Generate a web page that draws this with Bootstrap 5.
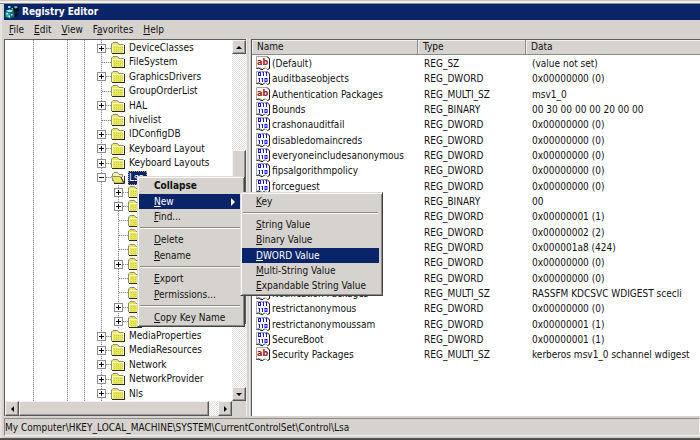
<!DOCTYPE html>
<html lang="en">
<head>
<meta charset="utf-8">
<meta name="viewport" content="width=device-width, initial-scale=1">
<title>Registry Editor</title>
<link href="https://cdn.jsdelivr.net/npm/bootstrap@5.3.0/dist/css/bootstrap.min.css" rel="stylesheet">
<style>
:root{--face:#d6d3ce;--navy:#0a246a;--shade:#848284;--edge:#5c5b59}
body{font:10px/14px "DejaVu Sans Condensed","DejaVu Sans",sans-serif;color:#111;background:var(--face);overflow:hidden}
u{text-underline-offset:1px;text-decoration-thickness:1px}
.app-window{padding:0 0 0 4px;border-bottom:2px solid #505050;box-shadow:inset 2px 0 #e4e2de}
.frame-top{height:4px;margin-left:-4px;border-top:1px solid #c9c6c1;border-bottom:1px solid #8d8c8a;background:#efeeeb}
.title-bar{height:16px;background:var(--navy);color:#fff;font-weight:bold;padding-left:1px;gap:3px}
.menu-bar{height:19px;padding-left:5px;gap:10px}
.menu-bar button,.popup-menu button{all:unset;cursor:default;color:#111}
.menu-bar button:focus-visible{outline:1px dotted #111}
.tree-pane{flex:0 0 242px;border-top:1px solid var(--edge);border-left:1px solid var(--edge)}
.splitter{flex:none;width:5px;background:linear-gradient(90deg,#edebe8 1px,var(--face) 1px,var(--face) 3px,#f3f2f0 3px,#c2bfba)}
.value-pane{border-top:1px solid var(--edge);border-left:1px solid var(--edge);background:#fff}
.tree-list{padding-top:1px;--dots:repeating-linear-gradient(#8a8a8a 0 1px,#e2e2e2 1px 2px);background:var(--dots) 28px 0/1px 100% no-repeat,var(--dots) 62px 0/1px 100% no-repeat,var(--dots) 79px 0/1px 100% no-repeat,var(--dots) 96px 0/1px 100% no-repeat #fff}
.tree-row{height:14px;padding-left:92px;white-space:nowrap}
li:nth-child(5n+3)>.tree-row,li:nth-child(5n)>.tree-row{height:15px}
.sub-list{background:var(--dots) 113px 0/1px 100% no-repeat}
.sub-list .tree-row{padding-left:109px}
.tree-row svg{width:14px;height:12px;flex:none}
.toggle{all:unset;box-sizing:border-box;width:9px;height:9px;border:1px solid #8c8c8c;background:linear-gradient(#000,#000) center/5px 1px no-repeat,linear-gradient(#000,#000) center/1px 5px no-repeat,#fff}
.toggle.opened{background:linear-gradient(#000,#000) center/5px 1px no-repeat,#fff}
.stem{width:5px;height:1px;background:repeating-linear-gradient(90deg,#8a8a8a 0 1px,#e2e2e2 1px 2px)}
.stem.leaf{width:9px;margin-left:5px}
.node-label{padding:0 1px;margin-left:3px}
.node-label.chosen{padding-right:3px;background:var(--navy);color:#fff;outline:1px dotted #b9a45c;outline-offset:-1px}
.scroll-v{width:14px;flex:none}
.scroll-h{height:15px}
.track{background:repeating-conic-gradient(#fff 0 25%,#e4e2de 0 50%) 0 0/2px 2px}
.raised{background:var(--face);border:1px solid;border-color:#f4f3f1 #555 #555 #f4f3f1;box-shadow:inset -1px -1px #9a9894}
.arrow-btn{all:unset;box-sizing:border-box;width:14px;height:14px;flex:none;display:grid;place-items:center;background:var(--face);border:1px solid;border-color:#f4f3f1 #555 #555 #f4f3f1;box-shadow:inset -1px -1px #9a9894}
.gap-above{height:96px}
.thumb-v{height:174px}
.thumb-h{flex:0 0 190px}
.values{table-layout:fixed;width:100%;border-collapse:separate;border-spacing:0}
.values th{height:15px;line-height:14px;padding:0 0 0 5px;font-weight:normal;background:var(--face);border-bottom:1px solid #8d8b87;border-right:1px solid #8d8b87;box-shadow:inset 1px 1px #f0efec}
.values th:last-child{border-right:0}
.values td{height:15px;line-height:13px;padding:2px 0 0 6px;white-space:nowrap}
.values tbody tr:nth-child(3n) td{height:16px}
.values td:first-child{padding-left:4px}
.values svg{width:15px;height:14px;flex:none;margin:-1px 1px 0 0}
.col-name{width:166px}
.col-type{width:108px}
.status-bar{margin:2px 0 2px;height:18px;border:1px solid;border-color:#8d8b87 #f4f3f1 #f4f3f1 #8d8b87;line-height:18px}
.popup-menu{position:absolute;z-index:10;display:block;margin:0;padding:1px;background:var(--face);border:1px solid;border-color:#dcdad6 #444 #444 #dcdad6;box-shadow:inset 1px 1px #fbfbfa,inset -1px -1px #8b8985;list-style:none}
.popup-menu li{height:15px;line-height:15px;padding:0 2px 0 15px;margin:0 2px 0 0;white-space:nowrap}
.popup-menu li.tall{height:16px;line-height:16px}
.popup-menu li.rule{height:8px;padding:3px 0 0}
.popup-menu li.rule hr{margin:0 1px;border:0;opacity:1;height:2px;background:linear-gradient(#8b8985 1px,#fbfbfa 1px)}
.popup-menu li.lit,.popup-menu li.lit>button{background:var(--navy);color:#fff}
.key-menu{left:137px;top:176px;width:108px}
.new-menu{left:101px;top:-2px;width:143px;color:#111}
.new-menu li{padding-left:14px}
</style>
<script src="https://cdn.jsdelivr.net/npm/bootstrap@5.3.0/dist/js/bootstrap.bundle.min.js"></script>
</head>
<body>
<svg class="d-none" aria-hidden="true">
  <symbol id="folder" viewBox="0 0 14 12"><path d="M1 11V2l1-1h5l1 1.500h4V11z" fill="#e9e75c"/><path d="M.5 11V2L2 .5h4.500L8 2.500h4.500" fill="none" stroke="#8f8e68"/><path d="M1.500 3v7.500M2 3.500h10" stroke="#fdfcc8"/><path d="M3 5.500h9M3 7.500h9M3 9.500h9" stroke="#d2cf40" stroke-dasharray="1 1"/><path d="M1 11.500h12.500M13.500 3v9" fill="none" stroke="#2b2b20"/></symbol>
  <symbol id="folder-open" viewBox="0 0 14 12"><path d="M1.500 9V2L3 .5h3.500L8 2.500h3.500V5" fill="#f6f4b4" stroke="#8f8e68"/><path d="M3.500 11 .5 4.500h9l3 6.500z" fill="#e9e75c" stroke="#8f8e68"/><path d="M3 11.500h10.500V4M10 5l3 6" fill="none" stroke="#2b2b20"/></symbol>
  <symbol id="page" viewBox="0 0 15 14"><path d="M.5 12.500V.5h11l2 2v10l-2 1-1.500-1.500H8L6.500 13.500 5 12H3z" fill="#fff" stroke="#a5a5a5"/><path d="M11 .5 13.500 3v9.500l-2 1M.5 12.500 3 12l2 1.500h2L8.500 12" fill="none" stroke="#222"/></symbol>
  <symbol id="text-value" viewBox="0 0 15 14"><use href="#page"/><text x="1" y="9" font-family="DejaVu Sans Condensed,sans-serif" font-size="9" font-weight="bold" fill="#a01414">ab</text></symbol>
  <symbol id="bits-value" viewBox="0 0 15 14"><use href="#page"/><g fill="none" stroke="#1414f0"><rect x="2.500" y="1.500" width="2" height="3"/><path d="M7.500 1v4M10.500 1v4M6.500 1.500h1M9.500 1.500h1M3.500 7v4M6.500 7v4M2.500 7.500h1M5.500 7.500h1"/><rect x="9" y="7.500" width="2" height="3"/></g></symbol>
</svg>

<div class="app-window d-flex flex-column vh-100 position-relative">
  <div class="frame-top"></div>
  <header class="title-bar d-flex align-items-center">
    <svg class="flex-shrink-0" width="14" height="14" viewBox="0 0 14 14" aria-hidden="true"><path d="M0 5.500 4 4l5 1.500V12l-4 2-5-2z" fill="#103c3c"/><path d="M.5 6.500 5 8v5.500L.5 12z" fill="#2fa3a3"/><path d="m.5 5.800 4-1.400L9 5.800 5 7.500z" fill="#8ff3f3"/><path d="M5 8l4-1.500V12l-4 1.500z" fill="#156a6a"/><path d="M1.500 8h1.500v1.500H1.500zM3.500 10.500H5V12H3.500zM6 9h1.500v1.500H6z" fill="#b4ffff"/><path d="M3 1h2.500v2H3zM6.500 3H8v1.500H6.500z" fill="#66e0e0"/><path d="m8 2 3-2 3 2.500V6l-3 1.500L8 5z" fill="#111"/><path d="m8.500 2 2.500-1.300L13 2.500l-2.500 1z" fill="#4cd0d0"/><path d="M10 8.500 12.500 8v3L10 12.500z" fill="#111"/></svg>
    <span>Registry Editor</span>
  </header>
  <nav class="menu-bar d-flex align-items-center" aria-label="Main">
    <button type="button"><u>F</u>ile</button>
    <button type="button"><u>E</u>dit</button>
    <button type="button"><u>V</u>iew</button>
    <button type="button">F<u>a</u>vorites</button>
    <button type="button"><u>H</u>elp</button>
  </nav>

  <main class="d-flex flex-grow-1 overflow-hidden">
    <section class="tree-pane d-flex flex-column" aria-label="Keys">
      <div class="d-flex flex-grow-1 overflow-hidden">
        <ul class="tree-list list-unstyled m-0 flex-grow-1 overflow-hidden">
          <li><div class="tree-row d-flex align-items-center"><button class="toggle" aria-label="Expand"></button><i class="stem"></i><svg><use href="#folder"/></svg><span class="node-label">DeviceClasses</span></div></li>
          <li><div class="tree-row d-flex align-items-center"><i class="stem leaf"></i><svg><use href="#folder"/></svg><span class="node-label">FileSystem</span></div></li>
          <li><div class="tree-row d-flex align-items-center"><button class="toggle" aria-label="Expand"></button><i class="stem"></i><svg><use href="#folder"/></svg><span class="node-label">GraphicsDrivers</span></div></li>
          <li><div class="tree-row d-flex align-items-center"><i class="stem leaf"></i><svg><use href="#folder"/></svg><span class="node-label">GroupOrderList</span></div></li>
          <li><div class="tree-row d-flex align-items-center"><button class="toggle" aria-label="Expand"></button><i class="stem"></i><svg><use href="#folder"/></svg><span class="node-label">HAL</span></div></li>
          <li><div class="tree-row d-flex align-items-center"><i class="stem leaf"></i><svg><use href="#folder"/></svg><span class="node-label">hivelist</span></div></li>
          <li><div class="tree-row d-flex align-items-center"><button class="toggle" aria-label="Expand"></button><i class="stem"></i><svg><use href="#folder"/></svg><span class="node-label">IDConfigDB</span></div></li>
          <li><div class="tree-row d-flex align-items-center"><button class="toggle" aria-label="Expand"></button><i class="stem"></i><svg><use href="#folder"/></svg><span class="node-label">Keyboard Layout</span></div></li>
          <li><div class="tree-row d-flex align-items-center"><button class="toggle" aria-label="Expand"></button><i class="stem"></i><svg><use href="#folder"/></svg><span class="node-label">Keyboard Layouts</span></div></li>
          <li><div class="tree-row d-flex align-items-center"><button class="toggle opened" aria-label="Collapse"></button><i class="stem"></i><svg><use href="#folder-open"/></svg><span class="node-label chosen">Lsa</span></div>
            <ul class="sub-list list-unstyled m-0">
              <li><div class="tree-row d-flex align-items-center"><button class="toggle" aria-label="Expand"></button><i class="stem"></i><svg><use href="#folder"/></svg></div></li>
              <li><div class="tree-row d-flex align-items-center"><button class="toggle" aria-label="Expand"></button><i class="stem"></i><svg><use href="#folder"/></svg></div></li>
              <li><div class="tree-row d-flex align-items-center"><i class="stem leaf"></i><svg><use href="#folder"/></svg></div></li>
              <li><div class="tree-row d-flex align-items-center"><i class="stem leaf"></i><svg><use href="#folder"/></svg></div></li>
              <li><div class="tree-row d-flex align-items-center"><i class="stem leaf"></i><svg><use href="#folder"/></svg></div></li>
              <li><div class="tree-row d-flex align-items-center"><button class="toggle" aria-label="Expand"></button><i class="stem"></i><svg><use href="#folder"/></svg></div></li>
              <li><div class="tree-row d-flex align-items-center"><i class="stem leaf"></i><svg><use href="#folder"/></svg></div></li>
              <li><div class="tree-row d-flex align-items-center"><i class="stem leaf"></i><svg><use href="#folder"/></svg></div></li>
              <li><div class="tree-row d-flex align-items-center"><button class="toggle" aria-label="Expand"></button><i class="stem"></i><svg><use href="#folder"/></svg></div></li>
              <li><div class="tree-row d-flex align-items-center"><button class="toggle" aria-label="Expand"></button><i class="stem"></i><svg><use href="#folder"/></svg></div></li>
            </ul>
          </li>
          <li><div class="tree-row d-flex align-items-center"><button class="toggle" aria-label="Expand"></button><i class="stem"></i><svg><use href="#folder"/></svg><span class="node-label">MediaProperties</span></div></li>
          <li><div class="tree-row d-flex align-items-center"><button class="toggle" aria-label="Expand"></button><i class="stem"></i><svg><use href="#folder"/></svg><span class="node-label">MediaResources</span></div></li>
          <li><div class="tree-row d-flex align-items-center"><button class="toggle" aria-label="Expand"></button><i class="stem"></i><svg><use href="#folder"/></svg><span class="node-label">Network</span></div></li>
          <li><div class="tree-row d-flex align-items-center"><button class="toggle" aria-label="Expand"></button><i class="stem"></i><svg><use href="#folder"/></svg><span class="node-label">NetworkProvider</span></div></li>
          <li><div class="tree-row d-flex align-items-center"><button class="toggle" aria-label="Expand"></button><i class="stem"></i><svg><use href="#folder"/></svg><span class="node-label">Nls</span></div></li>
        </ul>
        <div class="scroll-v track d-flex flex-column">
          <button class="arrow-btn" aria-label="Scroll up"><svg width="6" height="3"><path d="M0 3 3 0l3 3z"/></svg></button>
          <div class="gap-above"></div>
          <div class="thumb-v raised"></div>
          <button class="arrow-btn mt-auto" aria-label="Scroll down"><svg width="6" height="3"><path d="m0 0 3 3 3-3z"/></svg></button>
        </div>
      </div>
      <div class="scroll-h d-flex">
        <div class="track d-flex flex-grow-1">
          <button class="arrow-btn h-100" aria-label="Scroll left"><svg width="3" height="6"><path d="M3 0 0 3l3 3z"/></svg></button>
          <div class="thumb-h raised"></div>
          <button class="arrow-btn h-100 ms-auto" aria-label="Scroll right"><svg width="3" height="6"><path d="m0 0 3 3-3 3z"/></svg></button>
        </div>
        <div class="scroll-v"></div>
      </div>
    </section>
    <div class="splitter"></div>
    <section class="value-pane flex-grow-1 overflow-hidden" aria-label="Values">
      <table class="values">
        <colgroup><col class="col-name"><col class="col-type"><col></colgroup>
        <thead><tr><th scope="col">Name</th><th scope="col">Type</th><th scope="col">Data</th></tr></thead>
        <tbody>
          <tr><td><div class="d-flex"><svg><use href="#text-value"/></svg>(Default)</div></td><td>REG_SZ</td><td>(value not set)</td></tr>
          <tr><td><div class="d-flex"><svg><use href="#bits-value"/></svg>auditbaseobjects</div></td><td>REG_DWORD</td><td>0x00000000 (0)</td></tr>
          <tr><td><div class="d-flex"><svg><use href="#text-value"/></svg>Authentication Packages</div></td><td>REG_MULTI_SZ</td><td>msv1_0</td></tr>
          <tr><td><div class="d-flex"><svg><use href="#bits-value"/></svg>Bounds</div></td><td>REG_BINARY</td><td>00 30 00 00 00 20 00 00</td></tr>
          <tr><td><div class="d-flex"><svg><use href="#bits-value"/></svg>crashonauditfail</div></td><td>REG_DWORD</td><td>0x00000000 (0)</td></tr>
          <tr><td><div class="d-flex"><svg><use href="#bits-value"/></svg>disabledomaincreds</div></td><td>REG_DWORD</td><td>0x00000000 (0)</td></tr>
          <tr><td><div class="d-flex"><svg><use href="#bits-value"/></svg>everyoneincludesanonymous</div></td><td>REG_DWORD</td><td>0x00000000 (0)</td></tr>
          <tr><td><div class="d-flex"><svg><use href="#bits-value"/></svg>fipsalgorithmpolicy</div></td><td>REG_DWORD</td><td>0x00000000 (0)</td></tr>
          <tr><td><div class="d-flex"><svg><use href="#bits-value"/></svg>forceguest</div></td><td>REG_DWORD</td><td>0x00000000 (0)</td></tr>
          <tr><td></td><td>REG_BINARY</td><td>00</td></tr>
          <tr><td></td><td>REG_DWORD</td><td>0x00000001 (1)</td></tr>
          <tr><td></td><td>REG_DWORD</td><td>0x00000002 (2)</td></tr>
          <tr><td></td><td>REG_DWORD</td><td>0x000001a8 (424)</td></tr>
          <tr><td></td><td>REG_DWORD</td><td>0x00000000 (0)</td></tr>
          <tr><td></td><td>REG_DWORD</td><td>0x00000000 (0)</td></tr>
          <tr><td><div class="d-flex"><svg><use href="#text-value"/></svg>Notification Packages</div></td><td>REG_MULTI_SZ</td><td>RASSFM KDCSVC WDIGEST scecli</td></tr>
          <tr><td><div class="d-flex"><svg><use href="#bits-value"/></svg>restrictanonymous</div></td><td>REG_DWORD</td><td>0x00000000 (0)</td></tr>
          <tr><td><div class="d-flex"><svg><use href="#bits-value"/></svg>restrictanonymoussam</div></td><td>REG_DWORD</td><td>0x00000001 (1)</td></tr>
          <tr><td><div class="d-flex"><svg><use href="#bits-value"/></svg>SecureBoot</div></td><td>REG_DWORD</td><td>0x00000001 (1)</td></tr>
          <tr><td><div class="d-flex"><svg><use href="#text-value"/></svg>Security Packages</div></td><td>REG_MULTI_SZ</td><td>kerberos msv1_0 schannel wdigest</td></tr>
        </tbody>
      </table>
    </section>
  </main>

  <footer class="status-bar">My Computer\HKEY_LOCAL_MACHINE\SYSTEM\CurrentControlSet\Control\Lsa</footer>

  <ul class="popup-menu key-menu">
    <li class="tall"><button type="button" class="fw-bold">Collapse</button></li>
    <li class="lit position-relative"><button type="button" class="d-flex align-items-center justify-content-between w-100 h-100"><span><u>N</u>ew</span><svg class="me-1" width="4" height="8" fill="currentColor"><path d="m0 0 4 4-4 4z"/></svg></button>
      <ul class="popup-menu new-menu">
        <li><button type="button"><u>K</u>ey</button></li>
        <li class="rule px-0"><hr></li>
        <li><button type="button"><u>S</u>tring Value</button></li>
        <li class="tall"><button type="button"><u>B</u>inary Value</button></li>
        <li class="lit"><button type="button"><u>D</u>WORD Value</button></li>
        <li><button type="button"><u>M</u>ulti-String Value</button></li>
        <li class="tall"><button type="button"><u>E</u>xpandable String Value</button></li>
      </ul>
    </li>
    <li><button type="button"><u>F</u>ind...</button></li>
    <li class="rule"><hr></li>
    <li class="tall"><button type="button"><u>D</u>elete</button></li>
    <li><button type="button"><u>R</u>ename</button></li>
    <li class="rule"><hr></li>
    <li class="tall"><button type="button"><u>E</u>xport</button></li>
    <li><button type="button"><u>P</u>ermissions...</button></li>
    <li class="rule"><hr></li>
    <li><button type="button"><u>C</u>opy Key Name</button></li>
  </ul>
</div>
</body>
</html>
